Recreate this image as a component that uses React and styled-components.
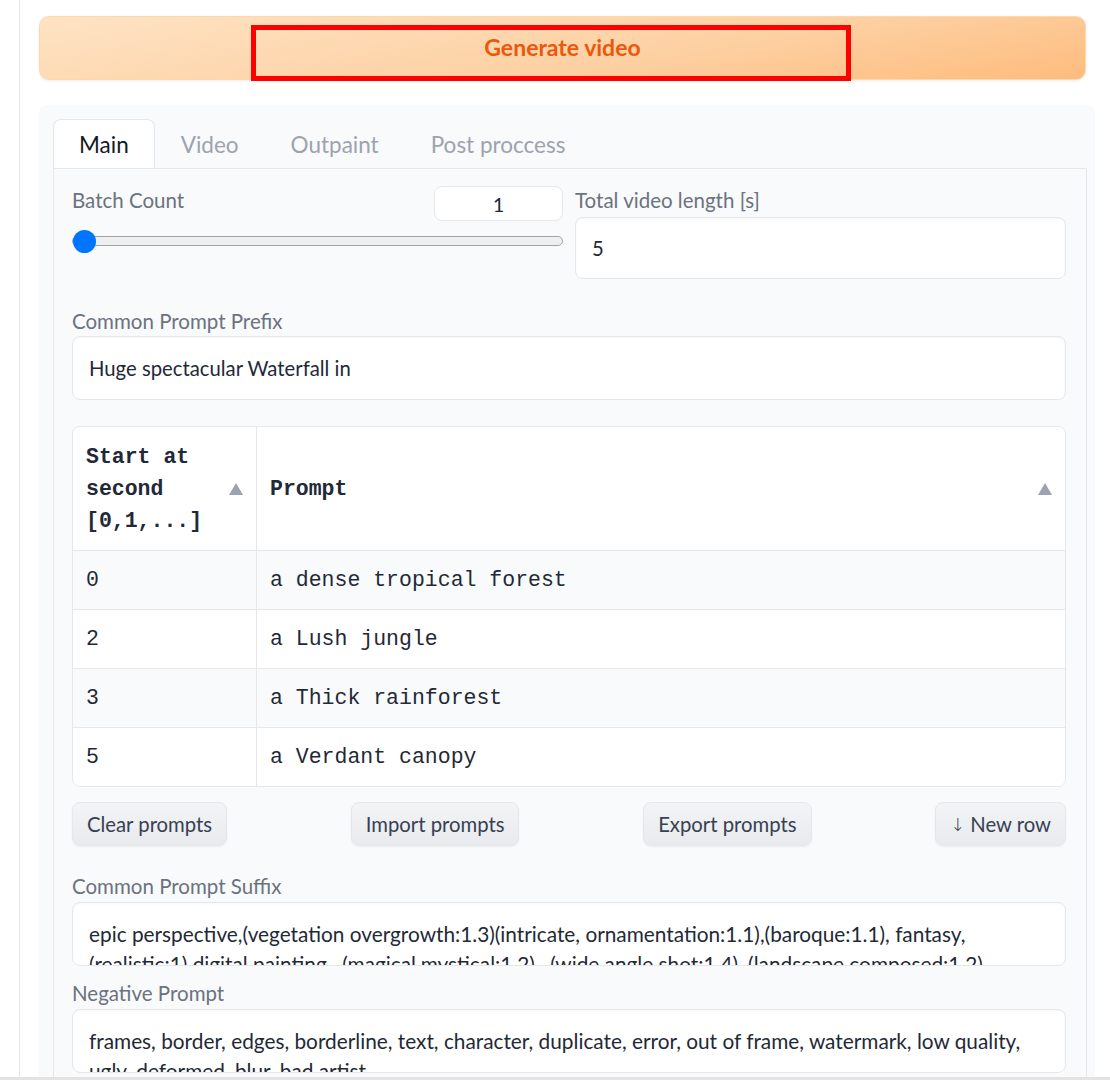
import React from 'react';
import styled, { createGlobalStyle } from 'styled-components';

const GlobalStyle = createGlobalStyle`
  html, body {
    margin: 0;
    padding: 0;
    background: #ffffff;
  }
  * {
    box-sizing: border-box;
  }
`;

const SANS = `"Lato", "Noto Sans", "Liberation Sans", sans-serif`;
const MONO = `"Liberation Mono", "DejaVu Sans Mono", monospace`;

const Page = styled.div`
  display: flex;
  height: 1080px;
  overflow: hidden;
  border-bottom: 3px solid #e3e3e3;
  font-family: ${SANS};
`;

const Gutter = styled.div`
  width: 20px;
  flex-shrink: 0;
  border-right: 1px solid #e5e7eb;
`;

const Main = styled.div`
  flex: 1;
  display: flex;
  flex-direction: column;
  padding: 16px 15px 0 19px;
  min-width: 0;
`;

const GenerateButton = styled.button`
  position: relative;
  height: 64px;
  margin-right: 9px;
  border: 1px solid #fed7aa;
  border-radius: 10px;
  background: linear-gradient(170deg, #fee3c4 0%, #fdd0a2 60%, #fdbc7e 100%);
  box-shadow: 0 1px 3px rgba(0, 0, 0, 0.08);
  color: #ea580c;
  font-family: ${SANS};
  font-weight: 700;
  font-size: 23px;
  padding: 0 0 2px;
  cursor: pointer;
`;

const Highlight = styled.span`
  position: absolute;
  left: 211px;
  top: 8px;
  width: 600px;
  height: 56px;
  border: 5px solid #ff0000;
  pointer-events: none;
`;

const Panel = styled.div`
  flex: 1;
  margin-top: 25px;
  padding: 14px 8px 0 14px;
  background: #f9fafb;
  border-radius: 8px 8px 0 0;
  display: flex;
  flex-direction: column;
`;

const TabBar = styled.div`
  display: flex;
  height: 49px;
`;

const Tab = styled.div`
  padding: 0 25px;
  display: flex;
  align-items: center;
  font-size: 22.5px;
  color: ${p => (p.$active ? '#111827' : '#9ca3af')};
  background: ${p => (p.$active ? '#ffffff' : 'transparent')};
  border: 1px solid ${p => (p.$active ? '#e5e7eb' : 'transparent')};
  border-bottom: none;
  border-radius: 8px 8px 0 0;
`;

const TabBody = styled.div`
  flex: 1;
  border: 1px solid #e5e7eb;
  border-bottom: none;
  padding: 17px 20px 0 18px;
  display: flex;
  flex-direction: column;
`;

const TwoCol = styled.div`
  display: grid;
  grid-template-columns: 1fr 1fr;
  column-gap: 12px;
`;

const Field = styled.div`
  display: flex;
  flex-direction: column;
  margin-top: ${p => p.$gap || 0}px;
`;

const LabelRow = styled.div`
  display: flex;
  justify-content: space-between;
  align-items: flex-start;
`;

const Label = styled.div`
  font-size: 20.5px;
  line-height: 28px;
  color: #6b7280;
  margin-bottom: ${p => p.$space || 0}px;
`;

const NumberBox = styled.div`
  width: 129px;
  height: 35px;
  background: #ffffff;
  border: 1px solid #e5e7eb;
  border-radius: 8px;
  display: flex;
  align-items: center;
  justify-content: center;
  font-size: 20px;
  color: #1f2937;
`;

const SliderTrack = styled.div`
  position: relative;
  margin-top: 15px;
  height: 10px;
  border: 1px solid #a3a3a3;
  background: #efefef;
  border-radius: 5px;
`;

const SliderThumb = styled.span`
  position: absolute;
  left: 0;
  top: 50%;
  width: 23px;
  height: 23px;
  margin-top: -11.5px;
  border-radius: 50%;
  background: #0075ff;
`;

const Input = styled.div`
  height: ${p => p.$h || 64}px;
  background: #ffffff;
  border: 1px solid #e5e7eb;
  border-radius: 8px;
  box-shadow: inset 0 1px 2px rgba(0, 0, 0, 0.03);
  padding: 0 16px;
  display: flex;
  align-items: center;
  font-size: 20.3px;
  color: #1f2937;
`;

const TextArea = styled.div`
  height: 64px;
  overflow: hidden;
  background: #ffffff;
  border: 1px solid #e5e7eb;
  border-radius: 8px;
  box-shadow: inset 0 1px 2px rgba(0, 0, 0, 0.03);
  padding: 16px 16px 0;
  font-size: 20.8px;
  line-height: 30px;
  color: #1f2937;
`;

const Line = styled.div`
  white-space: nowrap;
`;

const Table = styled.div`
  margin-top: 26px;
  border: 1px solid #e5e7eb;
  border-radius: 8px;
  overflow: hidden;
  background: #ffffff;
  font-family: ${MONO};
  color: #1f2937;
`;

const TRow = styled.div`
  display: grid;
  grid-template-columns: 183px 1fr;
  background: ${p => (p.$shade ? '#f9fafb' : '#ffffff')};
  border-top: ${p => (p.$first ? 'none' : '1px solid #e5e7eb')};
`;

const HeadCell = styled.div`
  height: 123px;
  padding: 0 13px 0 13px;
  display: flex;
  align-items: center;
  justify-content: space-between;
  font-weight: 700;
  font-size: 21.5px;
  line-height: 32px;
  border-left: ${p => (p.$divider ? '1px solid #e5e7eb' : 'none')};
`;

const SortArrow = styled.span`
  width: 0;
  height: 0;
  border-left: 7px solid transparent;
  border-right: 7px solid transparent;
  border-bottom: 12px solid #9ca3af;
  margin-left: 8px;
  flex-shrink: 0;
`;

const Cell = styled.div`
  height: 58px;
  padding: 0 13px;
  display: flex;
  align-items: center;
  font-size: 21.5px;
  white-space: pre;
  border-left: ${p => (p.$divider ? '1px solid #e5e7eb' : 'none')};
`;

const ButtonRow = styled.div`
  margin-top: 15px;
  display: flex;
  justify-content: space-between;
`;

const Button = styled.button`
  height: 44px;
  padding: 0 14px;
  border: 1px solid #e5e7eb;
  border-radius: 8px;
  background: linear-gradient(180deg, #f3f4f6 0%, #e9eaed 100%);
  box-shadow: 0 1px 2px rgba(0, 0, 0, 0.05);
  font-family: ${SANS};
  font-size: 20.3px;
  color: #374151;
  display: flex;
  align-items: center;
  gap: 5px;
`;

const Arrow = styled.span`
  font-family: "DejaVu Sans", sans-serif;
  font-size: 18px;
  font-weight: 300;
`;

const rows = [
  ['0', 'a dense tropical forest'],
  ['2', 'a Lush jungle'],
  ['3', 'a Thick rainforest'],
  ['5', 'a Verdant canopy'],
];

export default function App() {
  return (
    <>
      <GlobalStyle />
      <Page>
        <Gutter />
        <Main>
          <GenerateButton>
            Generate video
            <Highlight />
          </GenerateButton>
          <Panel>
            <TabBar>
              <Tab $active>Main</Tab>
              <Tab>Video</Tab>
              <Tab>Outpaint</Tab>
              <Tab>Post proccess</Tab>
            </TabBar>
            <TabBody>
              <TwoCol>
                <Field>
                  <LabelRow>
                    <Label>Batch Count</Label>
                    <NumberBox>1</NumberBox>
                  </LabelRow>
                  <SliderTrack>
                    <SliderThumb />
                  </SliderTrack>
                </Field>
                <Field>
                  <Label $space={3}>Total video length [s]</Label>
                  <Input $h={62}>5</Input>
                </Field>
              </TwoCol>

              <Field $gap={28}>
                <Label $space={1}>Common Prompt Prefix</Label>
                <Input>Huge spectacular Waterfall in</Input>
              </Field>

              <Table>
                <TRow $first>
                  <HeadCell>
                    <span>
                      Start at
                      <br />
                      second
                      <br />
                      [0,1,...]
                    </span>
                    <SortArrow />
                  </HeadCell>
                  <HeadCell $divider>
                    <span>Prompt</span>
                    <SortArrow />
                  </HeadCell>
                </TRow>
                {rows.map(([sec, prompt], i) => (
                  <TRow key={sec} $shade={i % 2 === 0}>
                    <Cell>{sec}</Cell>
                    <Cell $divider>{prompt}</Cell>
                  </TRow>
                ))}
              </Table>

              <ButtonRow>
                <Button>Clear prompts</Button>
                <Button>Import prompts</Button>
                <Button>Export prompts</Button>
                <Button>
                  <Arrow>↓</Arrow>
                  New row
                </Button>
              </ButtonRow>

              <Field $gap={26}>
                <Label $space={2}>Common Prompt Suffix</Label>
                <TextArea>
                  <Line>
                    epic perspective,(vegetation overgrowth:1.3)(intricate, ornamentation:1.1),(baroque:1.1), fantasy,
                  </Line>
                  <Line>
                    (realistic:1) digital painting , (magical,mystical:1.2) , (wide angle shot:1.4), (landscape composed:1.2)
                  </Line>
                </TextArea>
              </Field>

              <Field $gap={13}>
                <Label $space={2}>Negative Prompt</Label>
                <TextArea>
                  <Line>
                    frames, border, edges, borderline, text, character, duplicate, error, out of frame, watermark, low quality,
                  </Line>
                  <Line>ugly, deformed, blur, bad artist</Line>
                </TextArea>
              </Field>
            </TabBody>
          </Panel>
        </Main>
      </Page>
    </>
  );
}
